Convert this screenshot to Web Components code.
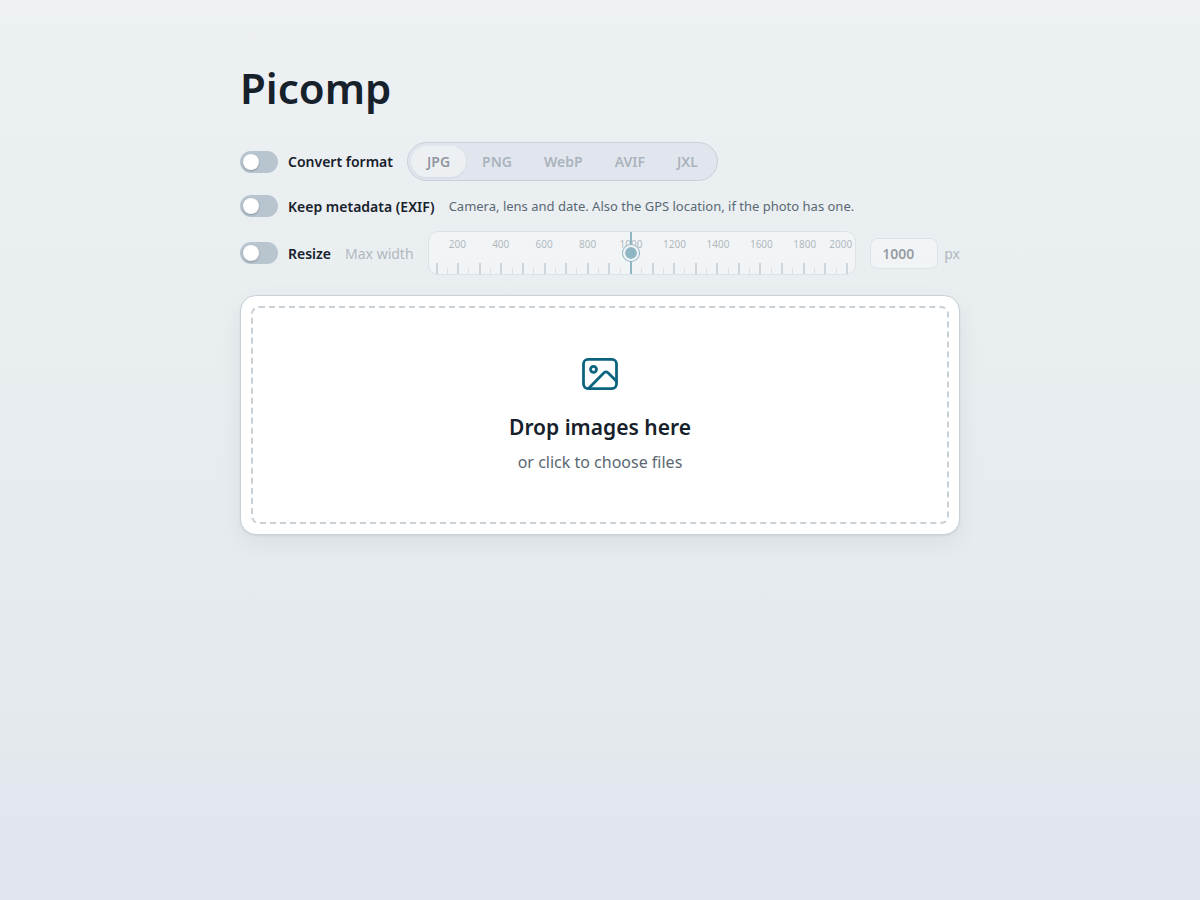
<!DOCTYPE html>
<html lang="en">
<head>
<meta charset="utf-8">
<meta name="viewport" content="width=device-width, initial-scale=1">
<title>Picomp</title>
<style>
:root {
  --ink: #17212b;
  --muted: #5a6872;
  --line: #c8d1d8;
  --accent: #0b6380;
  --surface: #ffffff;
  --inset: #e1e6ee;
  --off: #b8c4ce;
}
html { min-height: 100%; background: linear-gradient(180deg, #edf1f4 0%, #e3e9ec 82%, #e2e6ef 88%, #e1e5ee 100%); }
body { margin: 0; font: 14px/21px "Noto Sans", sans-serif; color: var(--ink); }
</style>
</head>
<body>
<picomp-app></picomp-app>
<script>
const attach = (el, html) => {
  const t = document.createElement('template');
  t.innerHTML = html;
  el.attachShadow({ mode: 'open' }).append(t.content.cloneNode(true));
  return el.shadowRoot;
};

class PicompSwitch extends HTMLElement {
  constructor() {
    super();
    attach(this, `
<style>
:host { display: block; flex: none; }
label { display: flex; align-items: center; gap: 10px; font-weight: 600; cursor: pointer; }
input { appearance: none; box-sizing: border-box; flex: none; display: flex; width: 38px; height: 22px; margin: 0; padding: 3px; border-radius: 11px; background: var(--off); cursor: pointer; }
input::before { content: ""; width: 16px; height: 16px; border-radius: 50%; background: #fff; box-shadow: 0 1px 2px rgb(23 33 43 / .3); }
input:checked { background: var(--accent); justify-content: flex-end; }
</style>
<label><input type="checkbox" role="switch"><span><slot></slot></span></label>`);
  }
  connectedCallback() {
    const box = this.shadowRoot.querySelector('input');
    box.addEventListener('change', () => {
      this.dispatchEvent(new CustomEvent('toggle-option', { detail: box.checked, bubbles: true }));
    });
  }
}

class PicompFormats extends HTMLElement {
  constructor() {
    super();
    const names = ['JPG', 'PNG', 'WebP', 'AVIF', 'JXL'];
    const root = attach(this, `
<style>
:host { display: block; }
div { display: flex; padding: 3px; border: 1px solid var(--line); border-radius: 20px; background: var(--inset); }
button { font: inherit; font-weight: 600; line-height: 19px; padding: 6px 16px; border: 0; border-radius: 16px; background: none; color: var(--muted); cursor: pointer; }
button[aria-pressed="true"] { background: #fffffa; color: var(--ink); box-shadow: 0 1px 2px rgb(23 33 43 / .15); }
button:disabled { opacity: .4; cursor: default; }
</style>
<div role="group" aria-label="Output format">${names.map((n, i) =>
  `<button type="button" aria-pressed="${i === 0}" disabled>${n}</button>`).join('')}</div>`);
    root.addEventListener('click', e => {
      const hit = e.target.closest('button');
      if (hit) root.querySelectorAll('button').forEach(b => b.setAttribute('aria-pressed', b === hit));
    });
  }
  set disabled(v) { this.shadowRoot.querySelectorAll('button').forEach(b => { b.disabled = v; }); }
}

class PicompRuler extends HTMLElement {
  constructor() {
    super();
    const ticks = Array.from({ length: 39 }, (_, i) => `<i${i % 2 ? '' : ' class="major"'}></i>`).join('');
    const labels = Array.from({ length: 10 }, (_, i) => `<span>${(i + 1) * 200}</span>`).join('');
    attach(this, `
<style>
:host { display: block; min-width: 0; }
.ruler { position: relative; box-sizing: border-box; display: flex; flex-direction: column; justify-content: space-between; height: 44px; padding: 5px 7px 0; border: 1px solid var(--line); border-radius: 10px; background: var(--surface); }
.labels { display: grid; grid-template-columns: repeat(9, minmax(0, 2fr)) minmax(0, 1fr); font-size: 10px; line-height: 14px; color: var(--muted); text-align: center; }
.labels span:last-child { display: flex; justify-content: flex-end; margin-right: -4px; }
.ticks { display: flex; justify-content: space-between; align-items: flex-end; }
i { display: flex; justify-content: center; width: 2px; height: 6px; }
i::before { content: ""; width: 1px; background: #c3cdd5; }
i.major { height: 11px; }
i.major::before { width: 2px; background: #a8b3bb; }
.needle { position: absolute; inset: 0 8px; pointer-events: none; }
.needle::before { content: ""; position: absolute; top: 0; bottom: 0; left: var(--at, 47.37%); width: 2px; margin-left: -1px; background: var(--accent); }
input { appearance: none; position: absolute; inset: 0; width: 100%; height: 42px; margin: 0; background: none; }
input::-webkit-slider-thumb { appearance: none; box-sizing: border-box; width: 16px; height: 16px; border: 2px solid #fff; border-radius: 50%; background: var(--accent); background-clip: padding-box; box-shadow: 0 0 0 1px var(--accent); }
</style>
<div class="ruler">
  <div class="labels" aria-hidden="true">${labels}</div>
  <div class="ticks">${ticks}</div>
  <div class="needle"></div>
  <input type="range" min="100" max="2000" value="1000" aria-label="Max width in pixels" disabled>
</div>`);
    const range = this.shadowRoot.querySelector('input');
    range.addEventListener('input', () => {
      this.place();
      this.dispatchEvent(new CustomEvent('width-change', { detail: range.value }));
    });
  }
  place() {
    const v = this.shadowRoot.querySelector('input').value;
    this.style.setProperty('--at', (v - 100) / 19 + '%');
  }
  set value(v) { this.shadowRoot.querySelector('input').value = v; this.place(); }
  set disabled(v) { this.shadowRoot.querySelector('input').disabled = v; }
}

class PicompResize extends HTMLElement {
  constructor() {
    super();
    const root = attach(this, `
<style>
:host { display: flex; align-items: center; gap: 14px; flex: 1; min-width: 0; opacity: .4; }
:host([active]) { opacity: 1; }
label { flex: none; color: var(--muted); }
picomp-ruler { flex: 1; }
.amount { display: flex; align-items: center; gap: 6px; flex: none; color: var(--muted); }
input { box-sizing: border-box; width: 68px; height: 31px; padding: 0 11px; border: 1px solid var(--line); border-radius: 8px; background: var(--surface); font: inherit; font-weight: 600; color: var(--ink); appearance: textfield; }
input::-webkit-inner-spin-button { appearance: none; margin: 0; }
</style>
<label for="width">Max width</label>
<picomp-ruler></picomp-ruler>
<div class="amount"><input id="width" type="number" min="1" value="1000" disabled><span>px</span></div>`);
    this.ruler = root.querySelector('picomp-ruler');
    this.field = root.querySelector('input');
    this.ruler.addEventListener('width-change', e => { this.field.value = e.detail; });
    this.field.addEventListener('input', () => { this.ruler.value = this.field.value; });
  }
  set disabled(v) {
    this.toggleAttribute('active', !v);
    this.field.disabled = v;
    this.ruler.disabled = v;
  }
}

class PicompDrop extends HTMLElement {
  constructor() {
    super();
    attach(this, `
<style>
:host { display: block; padding: 10px; border: 1px solid var(--line); border-radius: 16px; background: var(--surface); box-shadow: 0 1px 2px rgb(23 33 43 / .08), 0 8px 24px rgb(23 33 43 / .06); }
label { position: relative; display: flex; flex-direction: column; align-items: center; padding: 44px 16px 48px; border: 2px dashed var(--line); border-radius: 8px; cursor: pointer; text-align: center; }
svg { display: block; width: 44px; height: 44px; color: var(--accent); }
strong { margin-top: 16px; font-size: 21px; line-height: 30px; font-weight: 600; }
span { margin-top: 8px; font-size: 16px; line-height: 24px; color: var(--muted); }
input { position: absolute; inset: 0; width: 100%; height: 100%; opacity: 0; cursor: pointer; }
</style>
<label>
  <svg viewBox="0 0 44 44" fill="none" stroke="currentColor" stroke-width="2.75" stroke-linecap="round" stroke-linejoin="round" aria-hidden="true">
    <rect x="5.5" y="7.4" width="33" height="29.2" rx="4.5"/>
    <circle cx="15.5" cy="17.3" r="3"/>
    <path d="M10.5 36.5 26 20.8Q28 19 30 20.8L38.5 29.3"/>
  </svg>
  <strong>Drop images here</strong>
  <span>or click to choose files</span>
  <input type="file" accept="image/*" multiple>
</label>`);
  }
}

class PicompApp extends HTMLElement {
  constructor() {
    super();
    const root = attach(this, `
<style>
:host { display: block; box-sizing: border-box; max-width: 760px; margin: 0 auto; padding: 56px 20px; }
h1 { margin: 0 0 22px; font-size: 42px; line-height: 64px; font-weight: 600; }
.options { display: flex; flex-direction: column; gap: 14px; margin-bottom: 20px; }
.row { display: flex; align-items: center; gap: 14px; }
small { font-size: 13px; line-height: 20px; color: var(--muted); }
@media (max-width: 640px) { .row { flex-wrap: wrap; } }
</style>
<main>
  <h1>Picomp</h1>
  <div class="options">
    <div class="row"><picomp-switch id="convert">Convert format</picomp-switch><picomp-formats></picomp-formats></div>
    <div class="row"><picomp-switch>Keep metadata (EXIF)</picomp-switch><small>Camera, lens and date. Also the GPS location, if the photo has one.</small></div>
    <div class="row"><picomp-switch id="resize">Resize</picomp-switch><picomp-resize></picomp-resize></div>
  </div>
  <picomp-drop></picomp-drop>
</main>`);
    root.addEventListener('toggle-option', e => {
      const target = { convert: 'picomp-formats', resize: 'picomp-resize' }[e.target.id];
      if (target) root.querySelector(target).disabled = !e.detail;
    });
  }
}

customElements.define('picomp-switch', PicompSwitch);
customElements.define('picomp-formats', PicompFormats);
customElements.define('picomp-ruler', PicompRuler);
customElements.define('picomp-resize', PicompResize);
customElements.define('picomp-drop', PicompDrop);
customElements.define('picomp-app', PicompApp);
</script>
</body>
</html>
